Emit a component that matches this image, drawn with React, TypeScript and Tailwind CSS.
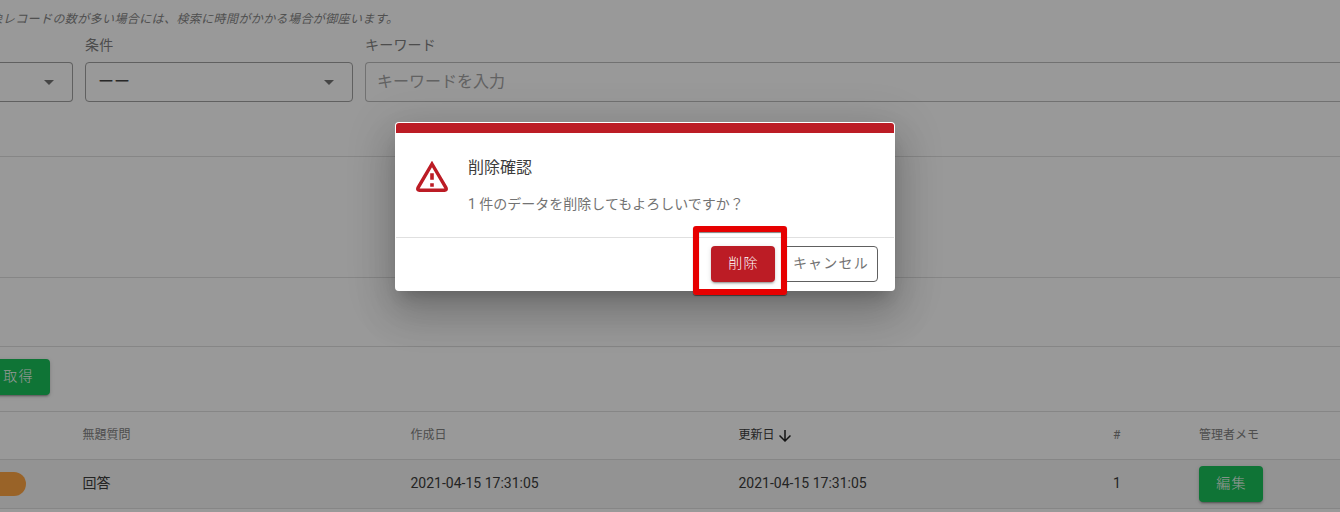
import { MdArrowDownward } from "react-icons/md";

const cjk = "font-['Roboto','Noto_Sans_CJK_JP',sans-serif]";

function Caret() {
  return (
    <svg viewBox="0 0 10 5" className="h-[5px] w-[10px] fill-[#757575]">
      <path d="M0 0h10L5 5z" />
    </svg>
  );
}

function WarningIcon() {
  return (
    <svg viewBox="0 0 32 32" className="mt-7 h-8 w-8 shrink-0" fill="none">
      <path
        d="M16 3 L30 26.8 Q30.9 29.2 28.6 29.2 H3.4 Q1.1 29.2 2 26.8 Z"
        stroke="#bc1c25"
        strokeWidth="3.4"
      />
      <path d="M14.2 12.3h3.6v6.4h-3.6zM14.2 22.2h3.6v3.6h-3.6z" fill="#bc1c25" />
    </svg>
  );
}

function GreenButton({ children }: { children: string }) {
  return (
    <button className="flex h-9 w-16 shrink-0 items-center justify-center rounded bg-[#19c15a] pb-0.5 pl-px text-sm font-light tracking-[1.25px] text-white shadow-[0_3px_1px_-2px_rgba(0,0,0,.2),0_2px_2px_0_rgba(0,0,0,.14),0_1px_5px_0_rgba(0,0,0,.12)]">
      {children}
    </button>
  );
}

function SearchForm() {
  return (
    <section className="h-[157px] border-b border-[#e0e0e0]">
      <p className="-ml-[22px] h-[35px] pt-[9px] text-xs leading-5 tracking-[0.4px] whitespace-nowrap text-[#858585] italic">
        対象レコードの数が多い場合には、検索に時間がかかる場合が御座います。
      </p>
      <div className="flex gap-3">
        <div className="w-[73px] pt-[27px]">
          <div className="flex h-10 items-center justify-end rounded-r border border-l-0 border-[#a0a0a0] pr-[18px]">
            <Caret />
          </div>
        </div>
        <div className="w-[268px]">
          <div className="h-[27px] text-sm leading-5 tracking-[0.2px] text-[#808080]">条件</div>
          <div className="flex h-10 items-center justify-between rounded border border-[#a0a0a0] pr-[18px] pl-3">
            <span className="text-base leading-6 text-[#444]">ーー</span>
            <Caret />
          </div>
        </div>
        <div className="flex-1">
          <div className="h-[27px] text-sm leading-5 tracking-[0.2px] text-[#808080]">キーワード</div>
          <div className="flex h-10 items-center rounded-l border border-r-0 border-[#bdbdbd] pl-[11px] text-base text-[#a3a3a3]">
            キーワードを入力
          </div>
        </div>
      </div>
    </section>
  );
}

function ResultsTable() {
  const cols = "grid grid-cols-[82.5px_328px_328px_374.5px_86px_1fr] items-center border-b border-[#e0e0e0]";
  return (
    <div>
      <div className={`${cols} h-12 pb-0.5 text-xs text-[#828282]`}>
        <span />
        <span>無題質問</span>
        <span>作成日</span>
        <span className="flex items-center text-[#3c3c3c]">
          更新日
          <MdArrowDownward size={18} className="mt-0.5 ml-px text-[#222]" />
        </span>
        <span>#</span>
        <span>管理者メモ</span>
      </div>
      <div className={`${cols} h-[49px] bg-[#f5f5f5] text-sm text-[#3c3c3c]`}>
        <span className="h-6 w-[26px] rounded-r-full bg-[#ffa544]" />
        <span className="pb-0.5">回答</span>
        <span className="pb-0.5">2021-04-15 17:31:05</span>
        <span className="pb-0.5">2021-04-15 17:31:05</span>
        <span className="pb-0.5">1</span>
        <GreenButton>編集</GreenButton>
      </div>
    </div>
  );
}

function DeleteDialog() {
  return (
    <div className="flex h-[169px] w-[500px] flex-col overflow-hidden rounded bg-white p-px">
      <div className="h-[10px] shrink-0 rounded-t-[3px] bg-[#bc1c25]" />
      <div className="flex h-[105px] shrink-0 gap-5 border-b border-[#e0e0e0] pl-5">
        <WarningIcon />
        <div className="pt-[23px]">
          <h2 className="text-base leading-6 text-[#3c3c3c]">削除確認</h2>
          <p className="pt-3 text-sm leading-6 text-[#737373]">1 件のデータを削除してもよろしいですか？</p>
        </div>
      </div>
      <div className="flex flex-1 items-center justify-end gap-2 pr-4">
        <button className="flex h-9 w-16 items-center justify-center rounded bg-[#bc1c25] pb-0.5 pl-px text-sm font-light tracking-[1.25px] text-white shadow-[0_3px_1px_-2px_rgba(0,0,0,.2),0_2px_2px_0_rgba(0,0,0,.14),0_1px_5px_0_rgba(0,0,0,.12)]">
          削除
        </button>
        <button className="flex h-9 w-[95px] items-center justify-center rounded border border-[#606060] pb-0.5 pl-px text-sm tracking-[1.25px] text-[#737373]">
          キャンセル
        </button>
      </div>
    </div>
  );
}

export default function App() {
  return (
    <main lang="ja" className={`relative h-[512px] w-full overflow-hidden bg-white ${cjk}`}>
      <SearchForm />
      <section className="h-[121px] border-b border-[#e0e0e0]" />
      <section className="h-[69px] border-b border-[#e0e0e0]" />
      <section className="flex h-[65px] items-start border-b border-[#e0e0e0] pt-3">
        <div className="-ml-[14px]">
          <GreenButton>取得</GreenButton>
        </div>
      </section>
      <ResultsTable />
      <div className="absolute inset-0 bg-black/40" />
      <div className="absolute top-[122px] left-[395px] rounded shadow-[0_11px_15px_-7px_rgba(0,0,0,.2),0_24px_38px_3px_rgba(0,0,0,.14),0_9px_46px_8px_rgba(0,0,0,.12)]">
        <DeleteDialog />
        <div className="absolute top-[104px] left-[298px] h-[69px] w-[94px] rounded-[3px] border-6 border-[#e60000] shadow-[0_1px_1px_rgba(0,0,0,.5),inset_0_1px_1px_rgba(0,0,0,.5)]" />
      </div>
    </main>
  );
}
